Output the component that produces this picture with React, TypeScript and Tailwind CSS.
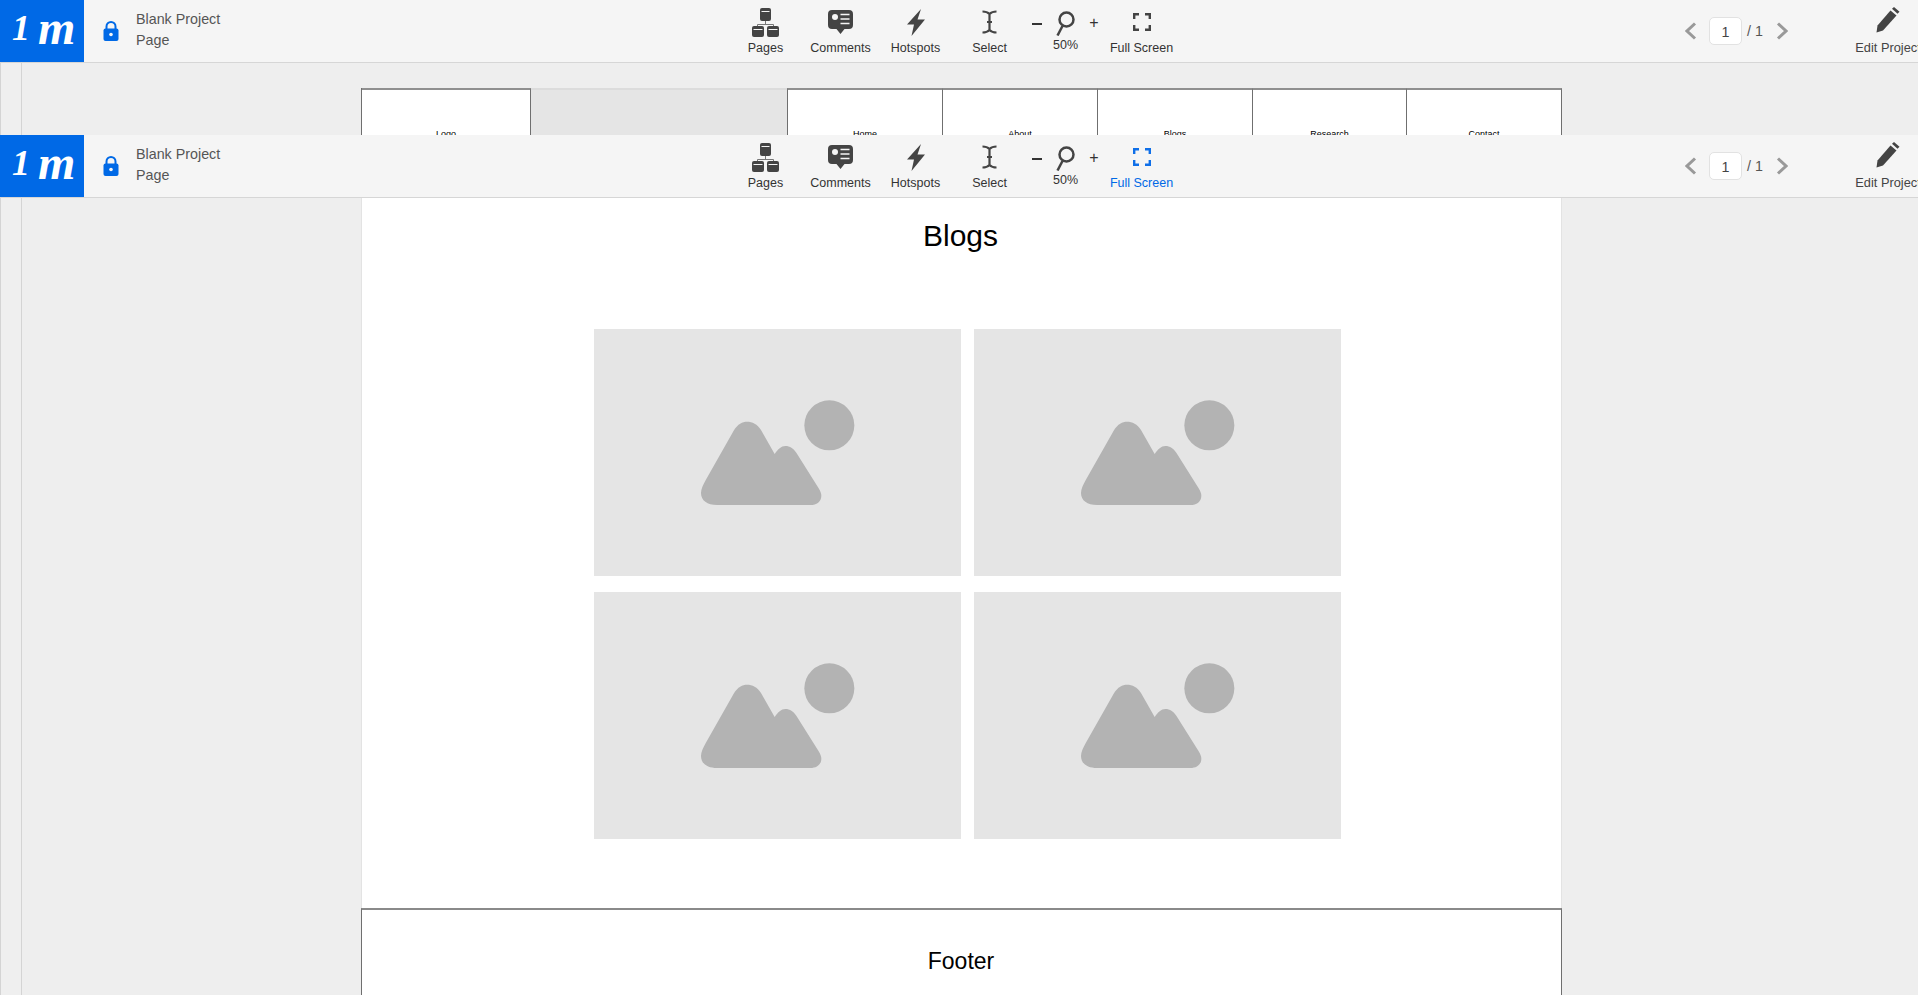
import React from "react";

const sans = "font-['Liberation_Sans',Arial,sans-serif]";

function PagesIcon() {
  return (
    <svg width="27" height="29" viewBox="0 0 27 29" fill="#444">
      <rect x="8" y="0" width="11" height="13" rx="2" />
      <rect x="9.500" y="3" width="8" height="1" fill="#f5f5f5" />
      <path d="M13.500 13v3.500M5.500 18.500v-2h16v2" fill="none" stroke="#777" strokeWidth="1" />
      <rect x="0" y="18" width="12" height="11" rx="2" />
      <rect x="1.500" y="21" width="9" height="1" fill="#f5f5f5" />
      <rect x="15" y="18" width="12" height="11" rx="2" />
      <rect x="16.500" y="21" width="9" height="1" fill="#f5f5f5" />
    </svg>
  );
}

function CommentsIcon() {
  return (
    <svg width="25" height="24" viewBox="0 0 25 24" fill="#444">
      <path d="M4 0h17a4 4 0 0 1 4 4v11a4 4 0 0 1-4 4h-4.500l-4 5-4-5H4a4 4 0 0 1-4-4V4a4 4 0 0 1 4-4z" />
      <circle cx="7" cy="7" r="3" fill="#f5f5f5" />
      <path d="M12.500 4.500h9M12.500 9h9M12.500 13.500h9" stroke="#f5f5f5" strokeWidth="1.400" />
    </svg>
  );
}

function HotspotsIcon() {
  return (
    <svg width="18" height="27" viewBox="0 0 18 27" fill="#444">
      <path d="M14 0L0 15.500h7L4.500 27 18 10.500h-7.500z" />
    </svg>
  );
}

function SelectIcon() {
  return (
    <svg width="15" height="24" viewBox="0 0 15 24" fill="none" stroke="#444" strokeWidth="2.200">
      <path d="M0.500 1.500c3 0 5 .5 7 2.500 2-2 4-2.500 7-2.500M0.500 22.500c3 0 5-.5 7-2.500 2 2 4 2.500 7 2.500M7.500 4v16M5 12h5" />
    </svg>
  );
}

function MagnifierIcon() {
  return (
    <svg width="19" height="25" viewBox="0 0 19 25" fill="none" stroke="#444" strokeWidth="2.500">
      <circle cx="10.500" cy="8.500" r="7" />
      <path d="M6.500 15L1.500 24.500" />
    </svg>
  );
}

function FullScreenIcon({ color }: { color: string }) {
  return (
    <svg width="18" height="18" viewBox="0 0 18 18" fill="none" stroke={color} strokeWidth="2.400">
      <path d="M6 1.200H1.200V6M12 1.200h4.800V6M6 16.800H1.200V12M12 16.800h4.800V12" />
    </svg>
  );
}

function LockIcon() {
  return (
    <svg width="16" height="20" viewBox="0 0 16 20">
      <path d="M3.500 9V5.500a4.500 4.500 0 0 1 9 0V9" fill="none" stroke="#0069e6" strokeWidth="2" />
      <rect x="0.500" y="7.500" width="15" height="12.500" rx="2" fill="#0069e6" />
      <circle cx="8" cy="13.500" r="1.800" fill="#f5f5f5" />
    </svg>
  );
}

function PencilIcon() {
  return (
    <svg width="24" height="26" viewBox="0 0 24 26" fill="#444">
      <path d="M0.500 25.500l1-7L14.500 3.500l6 5L7 23.500z" />
      <path d="M16 1.800l2-1.800 5.500 4.800-2 2z" />
    </svg>
  );
}

function Chevron({ right }: { right?: boolean }) {
  return (
    <svg width="12" height="18" viewBox="0 0 12 18" fill="none" stroke="#999" strokeWidth="3">
      <path d={right ? "M2 1.500L10 9l-8 7.500" : "M10 1.500L2 9l8 7.500"} />
    </svg>
  );
}

function ToolItem({ icon, label, blue }: { icon: React.ReactNode; label: string; blue?: boolean }) {
  return (
    <div className="w-[75px] h-[62px] flex flex-col items-center shrink-0">
      <div className="h-[41px] flex items-center justify-center pt-[3px]">{icon}</div>
      <div className={`text-[12.500px] leading-[14px] whitespace-nowrap ${blue ? "text-[#0069e6]" : "text-[#333]"}`}>
        {label}
      </div>
    </div>
  );
}

function Toolbar({ active }: { active?: boolean }) {
  return (
    <div className={`h-[63px] w-full flex items-stretch bg-[#f5f5f5] border-b border-[#d6d6d6] overflow-hidden shrink-0 ${sans}`}>
      <div className="w-[84px] h-[62px] bg-[#0069e6] text-white font-['Liberation_Serif',serif] italic font-bold text-[48px] leading-[56px] flex justify-start pl-[12px] gap-[8px] shrink-0">
        <span className="text-[36px]">1</span>
        <span>m</span>
      </div>
      <div className="w-[644px] flex items-center shrink-0">
        <div className="ml-[19px] mt-[-1px]">
          <LockIcon />
        </div>
        <div className="ml-[17px] mt-[-2px] text-[14.300px] leading-[21px] text-[#555]">
          <div>Blank Project</div>
          <div>Page</div>
        </div>
      </div>
      <div className="flex w-[452px] shrink-0">
        <ToolItem icon={<PagesIcon />} label="Pages" />
        <ToolItem icon={<CommentsIcon />} label="Comments" />
        <ToolItem icon={<HotspotsIcon />} label="Hotspots" />
        <div className="ml-[-1px]">
          <ToolItem icon={<SelectIcon />} label="Select" />
        </div>
        <div className="w-[77px] h-[62px] flex flex-col items-center shrink-0">
          <div className="h-[37px] flex items-center justify-center gap-[14px] pt-[10px] text-[#333]">
            <div className="w-[10px] h-[2px] bg-[#333]"></div>
            <MagnifierIcon />
            <div className="text-[16px] leading-none mt-[-1px]">+</div>
          </div>
          <div className="text-[12.500px] leading-[14px] mt-[1px] text-[#333]">50%</div>
        </div>
        <ToolItem
          icon={<FullScreenIcon color={active ? "#0f6fe8" : "#444"} />}
          label="Full Screen"
          blue={active}
        />
      </div>
      <div className="flex items-center w-[165px] ml-[505px] shrink-0">
        <Chevron />
        <div className="ml-[12px] w-[33px] h-[28px] bg-white border border-[#e2e2e2] rounded-[5px] flex items-center justify-center text-[14.300px] leading-[28px] pt-[1px] text-[#444]">
          1
        </div>
        <div className="ml-[5px] pt-[1px] text-[14.300px] text-[#555]">/ 1</div>
        <div className="ml-[13px]">
          <Chevron right />
        </div>
      </div>
      <div className="w-[66px] ml-[5px] h-[62px] flex flex-col items-center shrink-0">
        <div className="h-[41px] flex items-center justify-center pb-[1px]">
          <PencilIcon />
        </div>
        <div className="text-[12.800px] leading-[14px] text-[#444] whitespace-nowrap">Edit Project</div>
      </div>
    </div>
  );
}

function Rail() {
  return <div className="w-[22px] shrink-0 bg-[#efefef] border-l border-r border-[#d4d4d4]"></div>;
}

function NavCell({ label, className }: { label: string; className: string }) {
  return (
    <div className={`border-t-2 border-r border-t-[#8f8f8f] border-r-[#6f6f6f] bg-white h-[60px] pt-[39px] text-center text-[9px] leading-[10px] text-black ${className}`}>
      {label}
    </div>
  );
}

function Placeholder() {
  return (
    <div className="bg-[#e5e5e5] h-[247px]">
      <svg className="w-full h-full" viewBox="0 0 1101 741" fill="#b3b3b3">
        <circle cx="706" cy="289" r="75" />
        <path d="M369 528C340 528 321 515 321 492C321 480 328 466 334 455L419 305C432 284 445 278 459 278C475 278 490 285 501 303L542 375C552 360 562 351 574 351C588 351 598 358 607 371L674 478C680 488 682 494 682 500C682 518 668 528 649 528Z" />
      </svg>
    </div>
  );
}

export default function App() {
  return (
    <div className={`h-[995px] w-full overflow-hidden bg-[#eeeeee] flex flex-col ${sans}`}>
      <Toolbar />
      <div className="h-[72px] flex shrink-0 overflow-hidden">
        <Rail />
        <div className="pl-[339px] pt-[25px]">
          <div className="flex w-[1202px] border-l border-[#6f6f6f]">
            <NavCell label="Logo" className="w-[169px]" />
            <div className="w-[256px] h-[60px] bg-[#e5e5e5] border-t-2 border-t-[#dcdcdc]"></div>
            <NavCell label="Home" className="w-[156px] border-l border-l-[#6f6f6f]" />
            <NavCell label="About" className="w-[155px]" />
            <NavCell label="Blogs" className="w-[155px]" />
            <NavCell label="Research" className="w-[154px]" />
            <NavCell label="Contact" className="w-[155px]" />
          </div>
        </div>
      </div>
      <Toolbar active />
      <div className="flex flex-1 min-h-0">
        <Rail />
        <div className="ml-[339px] w-[1201px] bg-white border-l border-r border-[#e3e3e3] flex flex-col">
          <h1 className="text-[30px] leading-[34px] text-center text-black font-normal pt-[21px] pr-[2px] h-[131px] shrink-0">Blogs</h1>
          <div className="grid grid-cols-[367px_367px] gap-x-[13px] gap-y-[16px] pl-[232px] shrink-0">
            <Placeholder />
            <Placeholder />
            <Placeholder />
            <Placeholder />
          </div>
          <div className="mt-[69px] h-[120px] shrink-0 -mx-px border-l border-r border-t-2 border-l-[#6f6f6f] border-r-[#6f6f6f] border-t-[#8a8a8a] flex justify-center pt-[37px] pr-[1px] text-[23px] leading-[28px] text-black">
            Footer
          </div>
        </div>
      </div>
    </div>
  );
}
